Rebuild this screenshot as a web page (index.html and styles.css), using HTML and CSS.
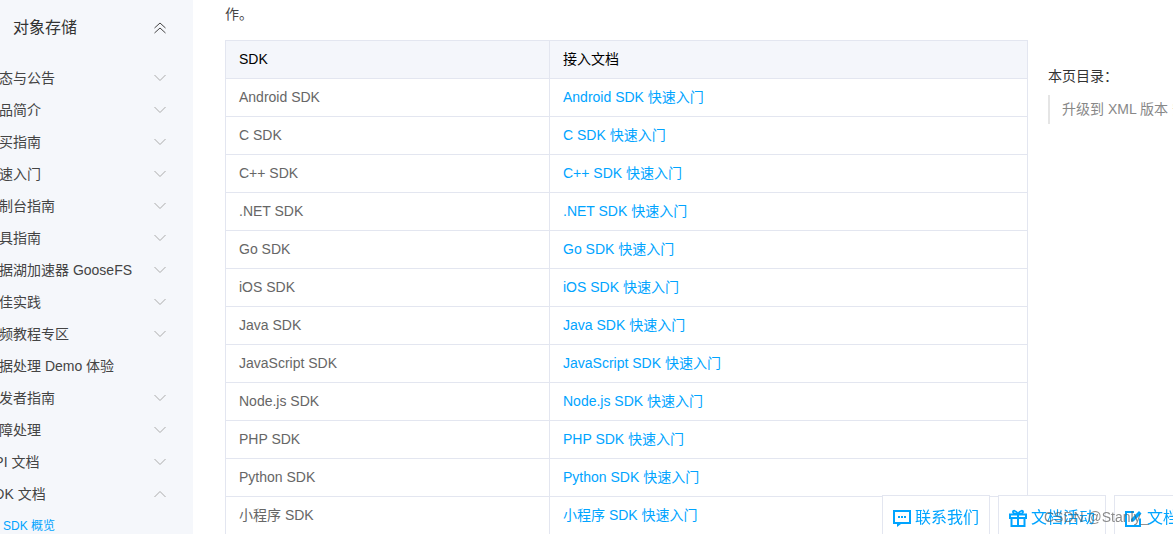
FILE: index.html
```html
<!DOCTYPE html>
<html lang="zh-CN">
<head>
  <meta charset="UTF-8" />
  <title>SDK 文档 - 对象存储</title>
  <link rel="stylesheet" href="styles.css">
</head>
<body>

<div class="page">
  <aside class="sidebar">
    <div class="side-title">
      <span>对象存储</span>
      <svg class="chev" width="14" height="14" viewBox="0 0 14 14"><path d="M1.500 7 7 2l5.500 5M1.500 12 7 7l5.500 5" fill="none" stroke="#444" stroke-width="1"/></svg>
    </div>
    <ul class="side-list">
      <li><span>状态与公告</span><svg class="chev" width="12" height="8" viewBox="0 0 12 8"><path d="M.5 1 6 6.500 11.500 1" fill="none" stroke="#aaa"/></svg></li>
      <li><span>产品简介</span><svg class="chev" width="12" height="8" viewBox="0 0 12 8"><path d="M.5 1 6 6.500 11.500 1" fill="none" stroke="#aaa"/></svg></li>
      <li><span>购买指南</span><svg class="chev" width="12" height="8" viewBox="0 0 12 8"><path d="M.5 1 6 6.500 11.500 1" fill="none" stroke="#aaa"/></svg></li>
      <li><span>快速入门</span><svg class="chev" width="12" height="8" viewBox="0 0 12 8"><path d="M.5 1 6 6.500 11.500 1" fill="none" stroke="#aaa"/></svg></li>
      <li><span>控制台指南</span><svg class="chev" width="12" height="8" viewBox="0 0 12 8"><path d="M.5 1 6 6.500 11.500 1" fill="none" stroke="#aaa"/></svg></li>
      <li><span>工具指南</span><svg class="chev" width="12" height="8" viewBox="0 0 12 8"><path d="M.5 1 6 6.500 11.500 1" fill="none" stroke="#aaa"/></svg></li>
      <li><span>数据湖加速器 GooseFS</span><svg class="chev" width="12" height="8" viewBox="0 0 12 8"><path d="M.5 1 6 6.500 11.500 1" fill="none" stroke="#aaa"/></svg></li>
      <li><span>最佳实践</span><svg class="chev" width="12" height="8" viewBox="0 0 12 8"><path d="M.5 1 6 6.500 11.500 1" fill="none" stroke="#aaa"/></svg></li>
      <li><span>视频教程专区</span><svg class="chev" width="12" height="8" viewBox="0 0 12 8"><path d="M.5 1 6 6.500 11.500 1" fill="none" stroke="#aaa"/></svg></li>
      <li><span>数据处理 Demo 体验</span></li>
      <li><span>开发者指南</span><svg class="chev" width="12" height="8" viewBox="0 0 12 8"><path d="M.5 1 6 6.500 11.500 1" fill="none" stroke="#aaa"/></svg></li>
      <li><span>故障处理</span><svg class="chev" width="12" height="8" viewBox="0 0 12 8"><path d="M.5 1 6 6.500 11.500 1" fill="none" stroke="#aaa"/></svg></li>
      <li><span>API 文档</span><svg class="chev" width="12" height="8" viewBox="0 0 12 8"><path d="M.5 1 6 6.500 11.500 1" fill="none" stroke="#aaa"/></svg></li>
      <li><span>SDK 文档</span><svg class="chev" width="12" height="8" viewBox="0 0 12 8"><path d="M.5 7 6 1.500 11.500 7" fill="none" stroke="#aaa"/></svg></li>
      <li class="side-sub"><span>SDK 概览</span></li>
    </ul>
  </aside>

  <main class="content">
    <p class="intro">作。</p>
    <table class="sdk-table">
      <thead>
        <tr><th>SDK</th><th>接入文档</th></tr>
      </thead>
      <tbody>
        <tr><td>Android SDK</td><td><a href="#">Android SDK 快速入门</a></td></tr>
        <tr><td>C SDK</td><td><a href="#">C SDK 快速入门</a></td></tr>
        <tr><td>C++ SDK</td><td><a href="#">C++ SDK 快速入门</a></td></tr>
        <tr><td>.NET SDK</td><td><a href="#">.NET SDK 快速入门</a></td></tr>
        <tr><td>Go SDK</td><td><a href="#">Go SDK 快速入门</a></td></tr>
        <tr><td>iOS SDK</td><td><a href="#">iOS SDK 快速入门</a></td></tr>
        <tr><td>Java SDK</td><td><a href="#">Java SDK 快速入门</a></td></tr>
        <tr><td>JavaScript SDK</td><td><a href="#">JavaScript SDK 快速入门</a></td></tr>
        <tr><td>Node.js SDK</td><td><a href="#">Node.js SDK 快速入门</a></td></tr>
        <tr><td>PHP SDK</td><td><a href="#">PHP SDK 快速入门</a></td></tr>
        <tr><td>Python SDK</td><td><a href="#">Python SDK 快速入门</a></td></tr>
        <tr><td>小程序 SDK</td><td><a href="#">小程序 SDK 快速入门</a></td></tr>
      </tbody>
    </table>
  </main>

  <aside class="toc">
    <div class="toc-title">本页目录：</div>
    <div class="toc-item">升级到 XML 版本 安全</div>
  </aside>
</div>

<div class="float-bar">
  <a class="float-btn" href="#">
    <svg width="18" height="18" viewBox="0 0 18 18"><path d="M0 1h18v14H8l-4 3v-3H0z" fill="#00a4ff"/><path d="M2 3h14v10H2z" fill="white"/><path d="M5 7h2v2H5zM8 7h2v2H8zM11 7h2v2h-2z" fill="#00a4ff"/></svg>
    联系我们
  </a>
  <a class="float-btn" href="#">
    <svg width="18" height="18" viewBox="0 0 18 18"><path d="M1 5.500h16v3.500H1zM2.500 9h13v8h-13zM9 5.500V17" fill="none" stroke="#00a4ff" stroke-width="2"/><path d="M9 5C7 1 3.500 1 4 3.200 4.300 4.500 7 5 9 5c2 0 4.700-.5 5-1.800C14.500 1 11 1 9 5z" fill="none" stroke="#00a4ff" stroke-width="1.800"/></svg>
    文档活动
  </a>
  <a class="float-btn" href="#">
    <svg width="18" height="18" viewBox="0 0 18 18"><path d="M15 9.500V17H1V3h8" fill="none" stroke="#00a4ff" stroke-width="2"/><path d="M6 10 14 2l2.500 2.500-8 8H6z" fill="#00a4ff"/></svg>
    文档反馈
  </a>
</div>
<div class="watermark">CSDN @Stanly_</div>

</body>
</html>
```

FILE: styles.css
```css
html, body {
  margin: 0;
  height: 100%;
  overflow: hidden;
}

body {
  font-family: "Liberation Sans", "Noto Sans CJK SC", sans-serif;
  font-size: 14px;
  color: #444;
  background: white;
}

.page {
  display: flex;
  height: 534px;
  overflow: hidden;
}

.sidebar {
  flex: 0 0 193px;
  background: #f5f7fb;
  overflow: hidden;
}

.side-title {
  display: flex;
  justify-content: space-between;
  align-items: center;
  height: 56px;
  padding: 0 26px 0 13px;
  font-size: 16px;
  line-height: 20px;
  color: #333;
}

.side-list {
  list-style: none;
  margin: 6px 0 0;
  padding: 0;
}

.side-list li {
  display: flex;
  justify-content: space-between;
  align-items: center;
  height: 32px;
  margin-left: -15px;
  padding-right: 27px;
  line-height: 20px;
  color: #444;
  white-space: nowrap;
}

.side-list .side-sub {
  font-size: 12px;
  color: #00a4ff;
  margin-left: 3px;
}

.content {
  flex: 0 0 803px;
  margin-left: 32px;
}

.intro {
  margin: 5px 0 16px;
  line-height: 19px;
}

.sdk-table {
  width: 803px;
  table-layout: fixed;
  border-collapse: collapse;
}

.sdk-table th,
.sdk-table td {
  height: 35px;
  padding: 0 13px 2px;
  line-height: 20px;
  text-align: left;
  font-weight: normal;
  border: 1px solid #e3e6f0;
  box-sizing: content-box;
}

.sdk-table th:first-child,
.sdk-table td:first-child {
  width: 297px;
}

.sdk-table th {
  background: #f4f6fb;
  color: #000;
}

.sdk-table td {
  color: #666;
}

.sdk-table a {
  color: #00a4ff;
  text-decoration: none;
}

.toc {
  flex: 0 0 200px;
  margin: 65px 0 0 20px;
}

.toc-title {
  color: #333;
  line-height: 22px;
}

.toc-item {
  margin-top: 8px;
  padding-left: 12px;
  line-height: 29px;
  color: #888;
  white-space: nowrap;
  border-left: 2px solid #e5e5e5;
}

.float-bar {
  position: fixed;
  left: 882px;
  top: 495px;
  display: flex;
  gap: 8px;
}

.float-btn {
  display: flex;
  align-items: center;
  gap: 4px;
  width: 108px;
  height: 44px;
  padding: 2px 0 0 10px;
  box-sizing: border-box;
  background: white;
  border: 1px solid #e3e6f0;
  color: #00a4ff;
  font-size: 16px;
  line-height: 20px;
  white-space: nowrap;
  text-decoration: none;
}

.watermark {
  position: fixed;
  left: 1044px;
  top: 509px;
  font-size: 14px;
  line-height: 16px;
  color: rgba(90, 90, 90, 0.7);
  white-space: nowrap;
}
```
